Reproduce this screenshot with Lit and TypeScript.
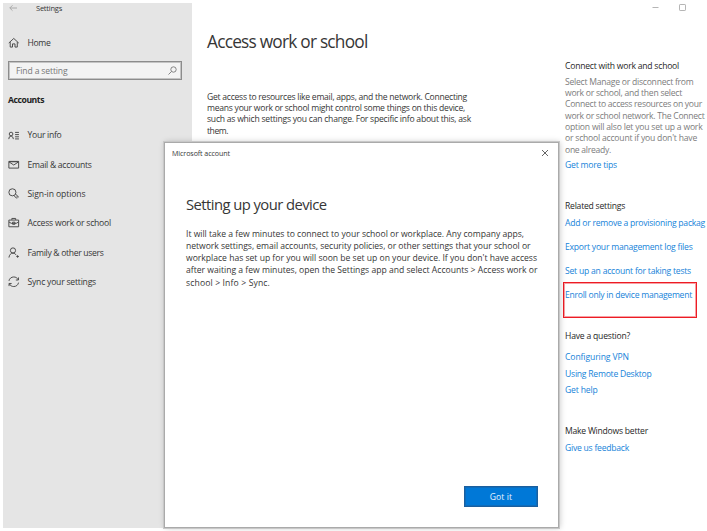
import { LitElement, html, svg, css } from "lit";
import { customElement, property } from "lit/decorators.js";

type Line = [text: string, width: number];

/* One line of text whose tracking is adjusted so that it spans a given width. */
@customElement("fit-line")
class FitLine extends LitElement {
  @property() text = "";
  @property({ type: Number }) width = 0;
  static styles = css`
    :host { display: block; white-space: pre; }
    .t { display: inline-block; }
  `;
  firstUpdated() {
    this.fit();
    document.fonts?.ready.then(() => this.fit());
  }
  fit() {
    const t = this.renderRoot.querySelector(".t") as HTMLElement;
    t.style.letterSpacing = "0px";
    const natural = t.getBoundingClientRect().width;
    t.style.letterSpacing = `${(this.width - natural) / this.text.length}px`;
  }
  render() {
    return html`<span class="t">${this.text}</span>`;
  }
}

const line = ([text, width]: Line, cls = "") =>
  html`<fit-line class=${cls} .text=${text} .width=${width}></fit-line>`;

const icons: Record<string, unknown> = {
  home: svg`<path d="M.8 6.300 6 1.500l5.200 4.800M2.300 5.300V10.500H4.700V7.200H7.300v3.300H9.700V5.300"/>`,
  info: svg`<path d="M.8 9.500 1.400 7.200 3.200 6.200l1.800 1.200.6 2.100M7.400 2.500h4M7.400 4.800h4M7.400 7.100h4M7.400 9.300h4"/><circle cx="3.200" cy="4.200" r="1.900"/>`,
  mail: svg`<path d="M.9 2.500h10.200v7H.9zM1 3l5 3.300L11 3M1 2.900h10"/>`,
  key: svg`<circle cx="4.600" cy="4.500" r="3.700"/><path d="M6.200 7.900 9.200 11M7.900 6.400l3.400 3.200M8.700 9.400h1.600"/>`,
  work: svg`<path d="M.9 3.200h10.200v7H.9zM4 3V1.500h4V3M1 5.200 3.400 6.600h5.200L11 5.200M4.800 5.400h2.400v2.200H4.800z"/>`,
  family: svg`<circle cx="5.200" cy="3.600" r="2.700"/><path d="M1 11C1.300 8.200 2.900 6.400 5.200 6.400c1.500 0 2.600.8 3.300 2.100M8.700 9.900h2.600M10 8.600v2.600"/>`,
  sync: svg`<path d="M1 5.100C1.400 2.700 3.400 1 6 1c2 0 3.700 1 4.600 2.900M10.900 1.500V4.200H8.200M11 6.900C10.600 9.300 8.600 11 6 11 4 11 2.300 10 1.400 8.100M1.100 10.500V7.800H3.800"/>`,
};
const icon = (name: string) =>
  html`<svg class="icon" viewBox="0 0 12 12">${icons[name]}</svg>`;

const nav: [string, string, number][] = [
  ["info", "Your info", 34],
  ["mail", "Email & accounts", 64],
  ["key", "Sign-in options", 58],
  ["work", "Access work or school", 83.5],
  ["family", "Family & other users", 76],
  ["sync", "Sync your settings", 68.5],
];

const intro: Line[] = [
  ["Get access to resources like email, apps, and the network. Connecting", 260],
  ["means your work or school might control some things on this device,", 258],
  ["such as which settings you can change. For specific info about this, ask", 264],
  ["them.", 21],
];

const help: Line[] = [
  ["Select Manage or disconnect from", 128.5],
  ["work or school, and then select", 117],
  ["Connect to access resources on your", 137],
  ["work or school network. The Connect", 139.5],
  ["option will also let you set up a work", 137.5],
  ["or school account if you don't have", 132],
  ["one already.", 46],
];

const body: Line[] = [
  ["It will take a few minutes to connect to your school or workplace. Any company apps,", 338],
  ["network settings, email accounts, security policies, or other settings that your school or", 344.5],
  ["workplace has set up for you will soon be set up on your device. If you don't have access", 351],
  ["after waiting a few minutes, open the Settings app and select Accounts > Access work or", 351.5],
  ["school > Info > Sync.", 84],
];

@customElement("app-root")
class AppRoot extends LitElement {
  static styles = css`
    :host {
      display: block; position: relative; width: 707px; height: 531px; overflow: hidden;
      background: #fff; color: #363636;
      font: 8.6px/12px "Open Sans", "Noto Sans", sans-serif;
    }
    svg { display: block; fill: none; stroke: currentColor; }
    .window {
      display: grid; grid-template-columns: 189px 358px 1fr;
      width: 702px; height: 525px; margin: 3px 2px 3px 3px;
    }
    .side { background: #e5e5e5; display: flex; flex-direction: column; }
    .bar { display: flex; align-items: center; height: 10px; padding-left: 6px; gap: 19px; font-size: 7.5px; }
    .back { width: 8px; height: 8px; color: #aaa; }
    .item { display: flex; align-items: center; gap: 8px; height: 29.3px; padding-left: 5px; }
    .icon { width: 11.5px; height: 11.5px; stroke-width: 1; color: #484848; }
    .home { margin-top: 15px; }
    .search {
      box-sizing: border-box; display: flex; align-items: center; justify-content: space-between;
      width: 174px; height: 19px; margin: 4px 0 0 5px; padding: 0 4px 0 7px;
      border: 1px solid #8c8c8c; box-shadow: inset 0 0 0 1px #c4c4c4; background: #f3f3f3; color: #777;
    }
    .glass { width: 9px; height: 9px; stroke-width: .9; }
    .group { margin: 14px 0 14.4px 5px; font-weight: 700; color: #222; }
    .main { padding: 25px 0 0 15px; }
    .h1 { font-size: 17.3px; line-height: 28px; }
    .intro { margin-top: 35.6px; line-height: 11.35px; }
    .aside { padding: 0 0 0 15px; display: flex; flex-direction: column; }
    .controls { display: flex; gap: 20px; padding-left: 87px; height: 10px; color: #b5b5b5; }
    .ctl { width: 7px; height: 9px; }
    .head { color: #262626; }
    .grey { margin-top: 4.6px; line-height: 11.35px; color: #7c7c7c; }
    .link { color: #1683d9; }
    .first { margin-top: 47px; }
    .tips { margin-top: 3.4px; }
    .related { margin-top: 28.5px; }
    .add { margin-top: 5px; }
    .far { margin-top: 12px; }
    .boxed {
      box-sizing: border-box; width: 134px; height: 36px; margin: 5px 0 0 -2.5px; padding: 6px 0 0 1.5px;
      border: 1px solid #ed1c24; box-shadow: inset 0 0 0 1px #f8a0a4;
    }
    .question { margin-top: 12px; }
    .vpn { margin-top: 9.5px; }
    .near { margin-top: 4.5px; }
    .better { margin-top: 29px; }
    .feedback { margin-top: 5px; }
    .dialog {
      position: absolute; left: 164px; top: 142px; width: 395px; height: 386px; box-sizing: border-box;
      display: flex; flex-direction: column; background: #fff;
      border: 1px solid #aaa; box-shadow: 0 0 0 1px #c8c8c8, 1px 0 6px rgba(0, 0, 0, .22);
    }
    .titlebar {
      display: flex; align-items: center; justify-content: space-between;
      height: 19px; padding: 0 9px 0 7px; font-size: 7.1px;
    }
    .close { width: 8px; height: 8px; color: #666; }
    .h2 { margin: 28px 0 0 21px; font-size: 14.8px; line-height: 28px; }
    .body { margin: 10px 0 0 21px; line-height: 12.15px; }
    .button {
      box-sizing: border-box; display: flex; align-items: center; justify-content: center;
      width: 74px; height: 21px; margin: auto 20px 20px auto;
      border: 1px solid #1a5f9f; box-shadow: inset 0 0 0 1px #0f6cba; background: #0078d7; color: #e8f3ff;
    }
  `;

  render() {
    return html`
      <div class="window">
        <nav class="side">
          <div class="bar">
            <svg class="back" viewBox="0 0 8 8"><path d="M8 4H.8M3.5 1.300.8 4l2.700 2.700" /></svg>
            ${line(["Settings", 26])}
          </div>
          <div class="item home">${icon("home")}${line(["Home", 23])}</div>
          <div class="search">
            ${line(["Find a setting", 51.5])}
            <svg class="glass" viewBox="0 0 9 9"><circle cx="5.500" cy="3.500" r="2.700" /><path d="M3.500 5.500.5 8.500" /></svg>
          </div>
          ${line(["Accounts", 36], "group")}
          ${nav.map(([i, t, w]) => html`<div class="item">${icon(i)}${line([t, w])}</div>`)}
        </nav>
        <main class="main">
          ${line(["Access work or school", 160.5], "h1")}
          <div class="intro">${intro.map((l) => line(l))}</div>
        </main>
        <aside class="aside">
          <div class="controls">
            <svg class="ctl" viewBox="0 0 7 9"><path d="M.5 4.500h6" /></svg>
            <svg class="ctl" viewBox="0 0 7 9"><rect x=".5" y="1.500" width="6" height="6" rx=".6" /></svg>
          </div>
          ${line(["Connect with work and school", 114], "head first")}
          <div class="grey">${help.map((l) => line(l))}</div>
          ${line(["Get more tips", 52], "link tips")}
          ${line(["Related settings", 60], "head related")}
          ${line(["Add or remove a provisioning packag", 140], "link add")}
          ${line(["Export your management log files", 127.5], "link far")}
          ${line(["Set up an account for taking tests", 126], "link far")}
          <div class="boxed">${line(["Enroll only in device management", 127], "link")}</div>
          ${line(["Have a question?", 65], "head question")}
          ${line(["Configuring VPN", 64], "link vpn")}
          ${line(["Using Remote Desktop", 86.5], "link near")}
          ${line(["Get help", 32.5], "link near")}
          ${line(["Make Windows better", 83], "head better")}
          ${line(["Give us feedback", 64], "link feedback")}
        </aside>
      </div>
      <section class="dialog">
        <div class="titlebar">
          ${line(["Microsoft account", 58])}
          <svg class="close" viewBox="0 0 8 8"><path d="m1 1 6 6M7 1 1 7" /></svg>
        </div>
        ${line(["Setting up your device", 140.5], "h2")}
        <div class="body">${body.map((l) => line(l))}</div>
        <div class="button">${line(["Got it", 22.5])}</div>
      </section>
    `;
  }
}
